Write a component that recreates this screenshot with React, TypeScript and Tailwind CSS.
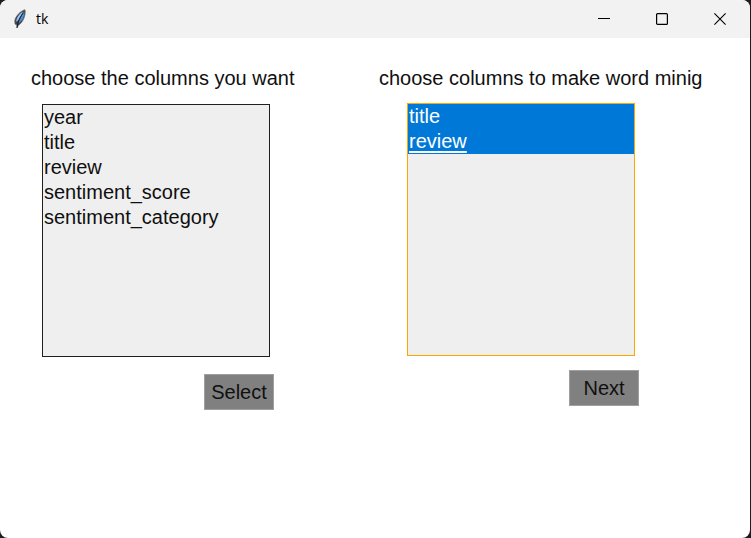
import { useState } from "react";

type PanelProps = {
  id: string;
  label: string;
  labelClass: string;
  listClass: string;
  options: string[];
  initial: string[];
  action: string;
  actionClass: string;
};

function Feather() {
  return (
    <svg width="15" height="20" viewBox="0 0 15 20" aria-hidden="true">
      <path d="M12 0.8C8 1.6 2.6 7 1.8 11.5L2 15L3.8 16L4 19L5.4 16.3C10 13.5 13 6 12 0.8Z" fill="#39404c" stroke="#6b6b6b" strokeWidth="0.8" />
      <path d="M10.2 2.6C7 4.2 3.6 8.2 3 12.8L5 11.6Z" fill="#9cc3ee" />
      <path d="M11.2 2.6C8.8 6.5 6.4 10.5 5.2 14.8C9.2 12 11.8 7.5 11.2 2.6Z" fill="#4a90e0" />
      <path d="M10.2 4C7.5 7.5 5 12 4 18.8" fill="none" stroke="#14171c" strokeWidth="0.8" />
    </svg>
  );
}

function TitleBar() {
  const button = "flex h-full w-[58px] items-center justify-center hover:bg-[#e0e0e0]";
  return (
    <header className="flex h-[38px] items-center justify-between bg-[#f2f2f2] pl-[13px]">
      <div className="flex items-center gap-2">
        <Feather />
        <h1 className="font-['Open_Sans',sans-serif] text-[14px] leading-5 text-black">tk</h1>
      </div>
      <div className="flex h-full pr-px">
        <button type="button" aria-label="Minimize" className={button}>
          <svg width="12" height="12" viewBox="0 0 12 12">
            <path d="M0 5.5H12" stroke="#000" strokeWidth="1" />
          </svg>
        </button>
        <button type="button" aria-label="Maximize" className={button}>
          <svg width="12" height="12" viewBox="0 0 12 12">
            <rect x="0.6" y="0.6" width="10.8" height="10.8" rx="1" fill="none" stroke="#000" strokeWidth="1.2" />
          </svg>
        </button>
        <button type="button" aria-label="Close" className={button}>
          <svg width="12" height="12" viewBox="0 0 12 12">
            <path d="M0.4 0.4L11.6 11.6M11.6 0.4L0.4 11.6" stroke="#000" strokeWidth="1.1" />
          </svg>
        </button>
      </div>
    </header>
  );
}

function Panel(props: PanelProps) {
  const [selected, setSelected] = useState(props.initial);
  const last = selected[selected.length - 1];
  return (
    <section className="flex flex-col items-start">
      <label htmlFor={props.id} className={`text-[20px] leading-6 whitespace-nowrap ${props.labelClass}`}>
        {props.label}
      </label>
      <div className={`ml-[42px] flex h-[253px] w-[228px] p-px ${props.listClass}`}>
        <select
          id={props.id}
          multiple
          value={selected}
          onChange={(e) => setSelected(Array.from(e.target.selectedOptions, (o) => o.value))}
          className="h-full w-full appearance-none overflow-hidden rounded-none border-0 bg-[#efefef] p-0 text-[20px] outline-none"
        >
          {props.options.map((name) => (
            <option
              key={name}
              value={name}
              className={`h-[25px] min-h-0 p-0 pt-px pl-px leading-6 text-[#101010] checked:bg-[#0078d7] checked:text-white ${
                name === last ? "underline decoration-2 underline-offset-3 [text-decoration-skip-ink:none]" : ""
              }`}
            >
              {name}
            </option>
          ))}
        </select>
      </div>
      <div className={`flex w-[274px] justify-end ${props.actionClass}`}>
        <button type="button" className="h-9 w-[70px] border border-[#a0a0a0] bg-[#808080] text-[20px] leading-6 text-[#101010]">
          {props.action}
        </button>
      </div>
    </section>
  );
}

export default function App() {
  return (
    <div className="flex min-h-screen bg-[#1c1c1c] pr-px font-['Liberation_Sans',Arial,sans-serif] text-[#101010]">
      <div className="flex grow flex-col overflow-hidden rounded-[8px] bg-white">
        <TitleBar />
        <main className="grid grid-cols-[365px_1fr] pt-[28px]">
          <Panel
            id="columns"
            label="choose the columns you want"
            labelClass="pl-[31px]"
            listClass="mt-[14px] bg-[#202020]"
            options={["year", "title", "review", "sentiment_score", "sentiment_category"]}
            initial={[]}
            action="Select"
            actionClass="mt-[17px]"
          />
          <Panel
            id="mining"
            label="choose columns to make word minig"
            labelClass="pl-[14px]"
            listClass="mt-[13px] bg-[#ffa500]"
            options={["title", "review"]}
            initial={["title", "review"]}
            action="Next"
            actionClass="mt-[14px]"
          />
        </main>
      </div>
    </div>
  );
}
